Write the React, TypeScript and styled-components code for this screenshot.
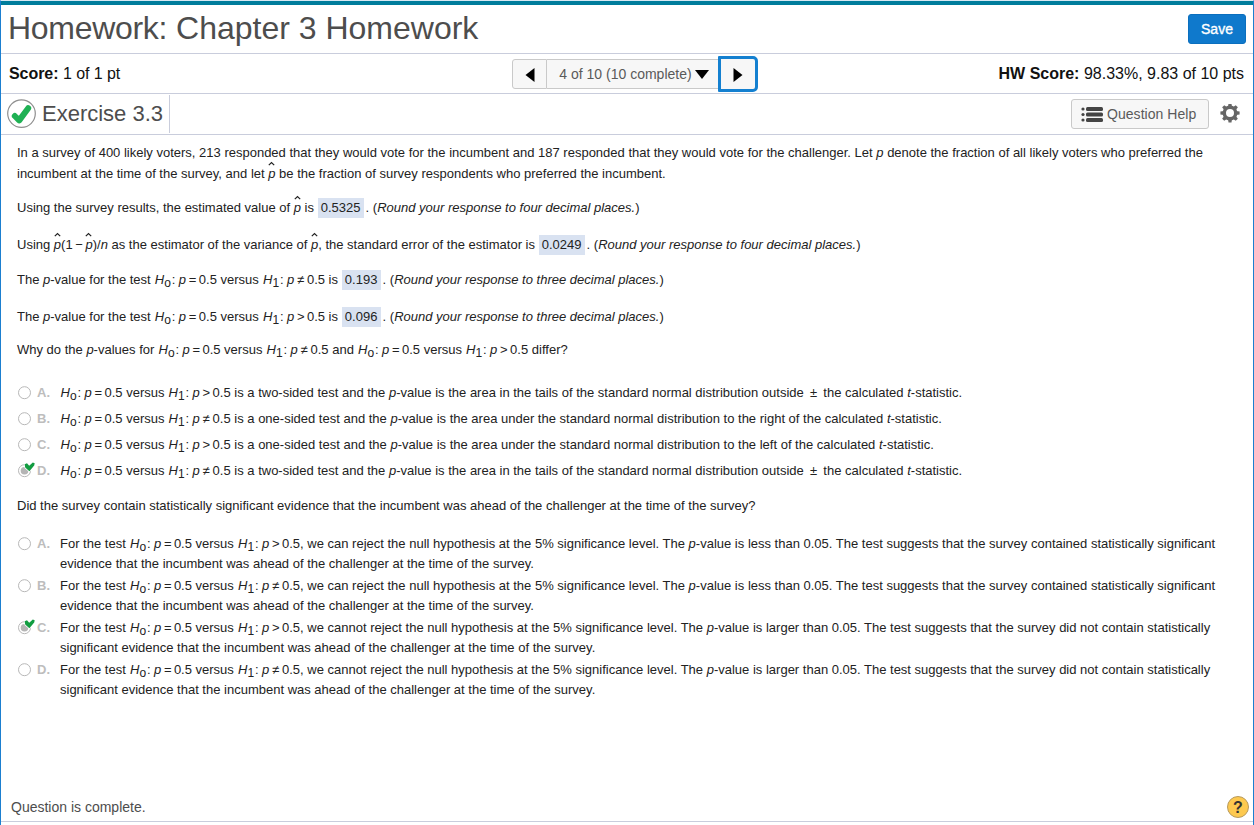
import React from "react";
import styled, { createGlobalStyle } from "styled-components";

const GlobalStyle = createGlobalStyle`
  * { box-sizing: border-box; }
  html, body { margin: 0; padding: 0; background: #fff; }
  body { font-family: "Liberation Sans", Arial, sans-serif; }
`;

const Page = styled.div`
  width: 1254px;
  height: 825px;
  display: flex;
  flex-direction: column;
  overflow: hidden;
  border-left: 1px solid #1b7fd0;
  border-right: 1px solid #1b7fd0;
  border-top: 1px solid #d8e9f3;
  background: #fff;
`;

const Header = styled.header`
  height: 53px;
  flex: none;
  display: flex;
  align-items: center;
  justify-content: space-between;
  padding: 0 7px;
  border-top: 4px solid #007d9c;
  border-bottom: 1px solid #c9cddc;
`;

const Title = styled.h1`
  margin: 0;
  padding-bottom: 2px;
  font-size: 32px;
  line-height: 44px;
  font-weight: 400;
  color: #4d4d4d;
  white-space: nowrap;
  span { letter-spacing: -0.3px; }
`;

const SaveButton = styled.button`
  width: 58px;
  height: 30px;
  padding: 0;
  border: 1px solid #0b6fbe;
  border-radius: 3px;
  background: #0f79cc;
  color: #fff;
  font: 14px "Liberation Sans", Arial, sans-serif;
  -webkit-text-stroke: 0.35px #fff;
`;

const ScoreBar = styled.div`
  height: 40px;
  flex: none;
  display: grid;
  grid-template-columns: 511px 246px 1fr;
  align-items: center;
  border-bottom: 1px solid #c9cddc;
`;

const Score = styled.div<{ $right?: boolean }>`
  padding: ${(p) => (p.$right ? "0 9px 0 0" : "0 0 0 8px")};
  text-align: ${(p) => (p.$right ? "right" : "left")};
  font-size: 16px;
  letter-spacing: ${(p) => (p.$right ? 0 : -0.05)}px;
  color: #111;
  white-space: nowrap;
`;

const Pager = styled.div`
  display: flex;
  align-items: center;
  height: 36px;
`;

const PagerButton = styled.button<{ $kind: "prev" | "pick" | "next" }>`
  display: flex;
  align-items: center;
  justify-content: center;
  gap: 3px;
  padding: ${(p) => (p.$kind === "pick" ? "0 0 0 3px" : "0")};
  width: ${(p) => ({ prev: 35, pick: 171, next: 40 })[p.$kind]}px;
  height: ${(p) => (p.$kind === "next" ? 36 : 30)}px;
  border: ${(p) => (p.$kind === "next" ? "3px solid #1480d0" : "1px solid #c9c9c9")};
  border-left-width: ${(p) => (p.$kind === "pick" ? 0 : p.$kind === "next" ? 3 : 1)}px;
  border-right-width: ${(p) => (p.$kind === "pick" ? 0 : p.$kind === "next" ? 3 : 1)}px;
  border-radius: ${(p) => ({ prev: "3px 0 0 3px", pick: "0", next: "1px 5px 5px 1px" })[p.$kind]};
  background: #f7f7f7;
  color: #5a5a5a;
  font: 14px "Liberation Sans", Arial, sans-serif;
  white-space: nowrap;
  svg { position: relative; top: 1px; }
`;

const ExerciseBar = styled.div`
  height: 41px;
  flex: none;
  display: flex;
  justify-content: space-between;
  border-bottom: 1px solid #c9cddc;
`;

const Exercise = styled.div`
  width: 169px;
  height: 38px;
  margin-top: 1px;
  display: flex;
  align-items: center;
  gap: 5px;
  padding-left: 6px;
  border-right: 1px solid #c9cddc;
  font-size: 22px;
  color: #4d4d4d;
  white-space: nowrap;
`;

const Tools = styled.div`
  display: flex;
  align-items: center;
  gap: 11px;
  padding-right: 13px;
`;

const HelpButton = styled.button`
  width: 138px;
  height: 30px;
  display: flex;
  align-items: center;
  gap: 4px;
  padding: 0 0 0 9px;
  border: 1px solid #c9c9c9;
  border-radius: 3px;
  background: #f7f7f7;
  color: #5a5a5a;
  font: 14px "Liberation Sans", Arial, sans-serif;
  letter-spacing: 0.05px;
  white-space: nowrap;
`;

const Content = styled.main`
  flex: 1;
  padding: 8px 0 0 16px;
  font-size: 13px;
  color: #222;
`;

const Line = styled.div<{ $gap?: number }>`
  height: 20px;
  line-height: 20px;
  margin-top: ${(p) => p.$gap ?? 0}px;
  white-space: pre;
`;

const Answer = styled.span<{ $w: number }>`
  display: inline-block;
  width: ${(p) => p.$w}px;
  height: 20px;
  margin: 0 2px 0 0;
  vertical-align: top;
  text-align: center;
  background: #d9e2f1;
`;

const Slot = styled.span<{ $w: number }>`
  display: inline-block;
  width: ${(p) => p.$w}px;
  height: 20px;
  vertical-align: top;
`;

const HSlot = styled(Slot)`
  margin-left: 0.5px;
`;

const Sub = styled(Slot)`
  font-size: 12px;
  line-height: 27px;
`;

const HatBox = styled.i`
  position: relative;
  svg { position: absolute; left: 0; top: -5px; }
`;

const Minus = styled.span`
  margin: 0 -1px;
`;

const Options = styled.ul<{ $gap: number; $space: number }>`
  list-style: none;
  margin: ${(p) => p.$gap}px 0 0;
  padding: 0;
  display: flex;
  flex-direction: column;
  gap: ${(p) => p.$space}px;
`;

const Option = styled.li`
  display: grid;
  grid-template-columns: 20px 23px 1fr;
  align-items: start;
`;

const Letter = styled.b`
  font-size: 13px;
  line-height: 20px;
  color: #bdbdbd;
  letter-spacing: 0.2px;
`;

const RadioIcon = styled.svg`
  display: block;
`;

const Footer = styled.footer`
  height: 30px;
  flex: none;
  display: flex;
  align-items: center;
  justify-content: space-between;
  padding: 0 3px 0 10px;
  margin-bottom: 3px;
  border-bottom: 1px solid #c9cddc;
  font-size: 14px;
  color: #4d4d4d;
`;

const Radio = ({ checked }: { checked?: boolean }) => (
  <RadioIcon width="20" height="20" viewBox="0 0 20 20">
    <circle cx="7.5" cy="9.7" r="6" fill="#fff" stroke="#b8b8b8" />
    {checked && (
      <>
        <circle cx="7.5" cy="9.7" r="3.8" fill="#b5b5b5" />
        <path
          d="M7.6 3.2 10 2.2 12.2 4.8 15.8 1.6 17.7 2.2 17.2 4.6 12.4 10.2 8.2 6.6Z"
          fill="#119c40"
          stroke="#fff"
          strokeWidth="1.4"
          paintOrder="stroke"
        />
      </>
    )}
  </RadioIcon>
);

const Hat = () => (
  <HatBox>
    p
    <svg width="7" height="5" viewBox="0 0 7 5">
      <path d="M0.8 4.2 3.5 1.5 6.2 4.2" fill="none" stroke="#222" strokeWidth="1.2" />
    </svg>
  </HatBox>
);

const Hyp = ({ n, op }: { n: string; op: string }) => (
  <>
    <HSlot $w={9.5}><i>H</i></HSlot>
    <Sub $w={7.5}>{n}</Sub>
    <Slot $w={7}>:</Slot>
    <Slot $w={10}><i>p</i></Slot>
    <Slot $w={10}>{op}</Slot>
    0.5
  </>
);

const Versus = ({ op }: { op: string }) => (
  <>
    <Hyp n="o" op="=" /> versus <Hyp n="1" op={op} />
  </>
);

const Round = ({ n }: { n: string }) => (
  <>
    . (<i>Round your response to {n} decimal places.</i>)
  </>
);

const tails = "in the tails of the standard normal distribution outside \u2009±\u2009 the calculated ";

const first = [
  { l: "A.", op: ">", a: "two-sided", t: tails },
  { l: "B.", op: "≠", a: "one-sided", t: "under the standard normal distribution to the right of the calculated " },
  { l: "C.", op: ">", a: "one-sided", t: "under the standard normal distribution to the left of the calculated " },
  { l: "D.", op: "≠", a: "two-sided", t: tails, on: true },
];

const second = [
  { l: "A.", op: ">", can: true },
  { l: "B.", op: "≠", can: true },
  { l: "C.", op: ">", can: false, on: true },
  { l: "D.", op: "≠", can: false },
];

export default function App() {
  return (
    <Page>
      <GlobalStyle />
      <Header>
        <Title><span>Homework:</span> Chapter 3 Homework</Title>
        <SaveButton>Save</SaveButton>
      </Header>
      <ScoreBar>
        <Score><b>Score:</b> 1 of 1 pt</Score>
        <Pager>
          <PagerButton $kind="prev" aria-label="Previous">
            <svg width="10" height="14" viewBox="0 0 10 14"><path d="M9.5 0v14L0.5 7Z" /></svg>
          </PagerButton>
          <PagerButton $kind="pick">
            4 of 10 (10 complete)
            <svg width="14" height="9" viewBox="0 0 14 9"><path d="M0 0h14L7 9Z" fill="#000" /></svg>
          </PagerButton>
          <PagerButton $kind="next" aria-label="Next">
            <svg width="10" height="14" viewBox="0 0 10 14"><path d="M0.5 0v14L9.5 7Z" /></svg>
          </PagerButton>
        </Pager>
        <Score $right><b>HW Score:</b> 98.33%, 9.83 of 10 pts</Score>
      </ScoreBar>
      <ExerciseBar>
        <Exercise>
          <svg width="30" height="30" viewBox="0 0 30 30">
            <circle cx="14.5" cy="14.6" r="13.8" fill="#fff" stroke="#8f8f8f" strokeWidth="1.2" />
            <path d="M7.8 17 12.2 21.4 21.2 9.2" fill="none" stroke="#1fb154" strokeWidth="6" strokeLinecap="round" strokeLinejoin="round" />
          </svg>
          Exercise 3.3
        </Exercise>
        <Tools>
          <HelpButton>
            <svg width="22" height="16" viewBox="0 0 22 16" fill="#444">
              {[3, 8.5, 14].map((y) => (
                <g key={y}>
                  <circle cx="2" cy={y} r="1.6" />
                  <rect x="5" y={y - 2} width="17" height="4" rx="1.5" />
                </g>
              ))}
            </svg>
            Question Help
          </HelpButton>
          <svg width="20" height="20" viewBox="-10 -9 20 20" fill="#666">
            {[0, 45, 90, 135, 180, 225, 270, 315].map((a) => (
              <path key={a} d="M-2-6-1.5-9.6H1.5L2-6Z" transform={`rotate(${a})`} />
            ))}
            <circle r="5.7" fill="none" stroke="#666" strokeWidth="3.4" />
          </svg>
        </Tools>
      </ExerciseBar>
      <Content>
        <Line>In a survey of 400 likely voters, 213 responded that they would vote for the incumbent and 187 responded that they would vote for the challenger. Let <i>p</i> denote the fraction of all likely voters who preferred the</Line>
        <Line $gap={1}>incumbent at the time of the survey, and let <Hat /> be the fraction of survey respondents who preferred the incumbent.</Line>
        <Line $gap={14}>Using the survey results, the estimated value of <Hat /> is <Answer $w={46}>0.5325</Answer><Round n="four" /></Line>
        <Line $gap={17}>Using <Hat />(1<Minus> − </Minus><Hat />)/<i>n</i> as the estimator of the variance of <Hat />, the standard error of the estimator is <Answer $w={46}>0.0249</Answer><Round n="four" /></Line>
        <Line $gap={15}>The <i>p</i>-value for the test <Versus op="≠" /> is <Answer $w={39}>0.193</Answer><Round n="three" /></Line>
        <Line $gap={17}>The <i>p</i>-value for the test <Versus op=">" /> is <Answer $w={39}>0.096</Answer><Round n="three" /></Line>
        <Line $gap={13}>Why do the <i>p</i>-values for <Versus op="≠" /> and <Versus op=">" /> differ?</Line>
        <Options $gap={23} $space={6}>
          {first.map((o) => (
            <Option key={o.l}>
              <Radio checked={o.on} />
              <Letter>{o.l}</Letter>
              <Line><Versus op={o.op} /> is a {o.a} test and the <i>p</i>-value is the area {o.t}<i>t</i>-statistic.</Line>
            </Option>
          ))}
        </Options>
        <Line $gap={15}>Did the survey contain statistically significant evidence that the incumbent was ahead of the challenger at the time of the survey?</Line>
        <Options $gap={18} $space={2}>
          {second.map((o) => (
            <Option key={o.l}>
              <Radio checked={o.on} />
              <Letter>{o.l}</Letter>
              <div>
                <Line>For the test <Versus op={o.op} />, we {o.can ? "can" : "cannot"} reject the null hypothesis at the 5% significance level. The <i>p</i>-value is {o.can ? "less" : "larger"} than 0.05. The test suggests that the survey {o.can ? "contained statistically significant" : "did not contain statistically"}</Line>
                <Line>{o.can ? "" : "significant "}evidence that the incumbent was ahead of the challenger at the time of the survey.</Line>
              </div>
            </Option>
          ))}
        </Options>
      </Content>
      <Footer>
        Question is complete.
        <svg width="24" height="24" viewBox="0 0 24 24">
          <circle cx="12" cy="12" r="10.5" fill="#fdc94f" stroke="#b89a5c" />
          <text x="12" y="17.5" textAnchor="middle" fontFamily="Liberation Sans" fontWeight="700" fontSize="16" fill="#333">?</text>
        </svg>
      </Footer>
    </Page>
  );
}
